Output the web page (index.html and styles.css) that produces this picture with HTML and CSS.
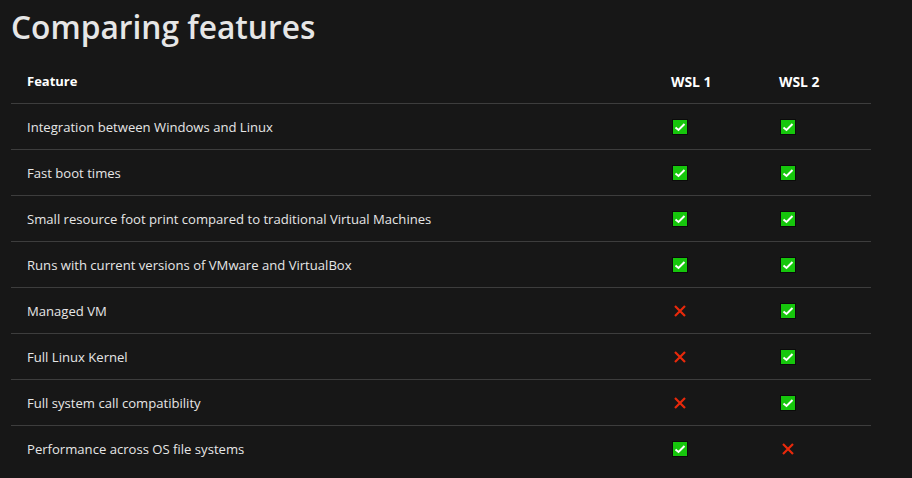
FILE: index.html
```html
<!DOCTYPE html>
<html lang="en">
<head>
<meta charset="utf-8">
<title>Comparing features</title>
<link rel="stylesheet" href="styles.css">
</head>
<body>
<svg class="defs" width="0" height="0" aria-hidden="true">
<symbol id="yes" viewBox="0 0 16 16"><rect x="0.5" y="0.5" width="15" height="15" fill="#16c60c" stroke="#0b0b0b"/><path d="M3.5 8.5 6.5 11 12.5 5" fill="none" stroke="#fff" stroke-width="2"/></symbol>
<symbol id="no" viewBox="0 0 16 16"><path d="M3 3 13 13M13 3 3 13" fill="none" stroke="#e8290b" stroke-width="2.2"/></symbol>
</svg>
<h1 class="title">Comparing features</h1>
<table class="compare">
<thead><tr><th>Feature</th><th class="mark">WSL 1</th><th class="mark">WSL 2</th></tr></thead>
<tbody>
<tr><td>Integration between Windows and Linux</td><td class="mark"><svg class="icon"><use href="#yes"/></svg></td><td class="mark"><svg class="icon"><use href="#yes"/></svg></td></tr>
<tr><td>Fast boot times</td><td class="mark"><svg class="icon"><use href="#yes"/></svg></td><td class="mark"><svg class="icon"><use href="#yes"/></svg></td></tr>
<tr><td>Small resource foot print compared to traditional Virtual Machines</td><td class="mark"><svg class="icon"><use href="#yes"/></svg></td><td class="mark"><svg class="icon"><use href="#yes"/></svg></td></tr>
<tr><td>Runs with current versions of VMware and VirtualBox</td><td class="mark"><svg class="icon"><use href="#yes"/></svg></td><td class="mark"><svg class="icon"><use href="#yes"/></svg></td></tr>
<tr><td>Managed VM</td><td class="mark"><svg class="icon"><use href="#no"/></svg></td><td class="mark"><svg class="icon"><use href="#yes"/></svg></td></tr>
<tr><td>Full Linux Kernel</td><td class="mark"><svg class="icon"><use href="#no"/></svg></td><td class="mark"><svg class="icon"><use href="#yes"/></svg></td></tr>
<tr><td>Full system call compatibility</td><td class="mark"><svg class="icon"><use href="#no"/></svg></td><td class="mark"><svg class="icon"><use href="#yes"/></svg></td></tr>
<tr><td>Performance across OS file systems</td><td class="mark"><svg class="icon"><use href="#yes"/></svg></td><td class="mark"><svg class="icon"><use href="#no"/></svg></td></tr>
</tbody>
</table>
</body>
</html>
```
FILE: styles.css
```css
html, body { margin: 0; padding: 0; background: #171717; overflow: hidden; }
body { padding-left: 11px; font-family: "Open Sans", "Noto Sans", sans-serif; color: #e6e6e6; height: 478px; box-sizing: border-box; }
.defs { position: absolute; }
.title { margin: 0; height: 57px; font-size: 31.7px; font-weight: 600; line-height: 54px; color: #e6e6e6; }
.compare { width: 860px; border-collapse: collapse; table-layout: fixed; font-size: 13.1px; }
.compare th, .compare td { text-align: left; padding: 1px 16px 0; box-sizing: border-box; border-bottom: 1px solid #3d3d3d; height: 46px; vertical-align: middle; }
.compare th { font-weight: 700; color: #fff; font-size: 13.9px; padding-top: 3px; }
.compare th:first-child { font-size: 13px; }
.compare th.mark, .compare td.mark { width: 108px; }
.compare tbody tr:last-child td { border-bottom: 0; }
.icon { display: block; width: 16px; height: 16px; margin-left: 1px; }
```
